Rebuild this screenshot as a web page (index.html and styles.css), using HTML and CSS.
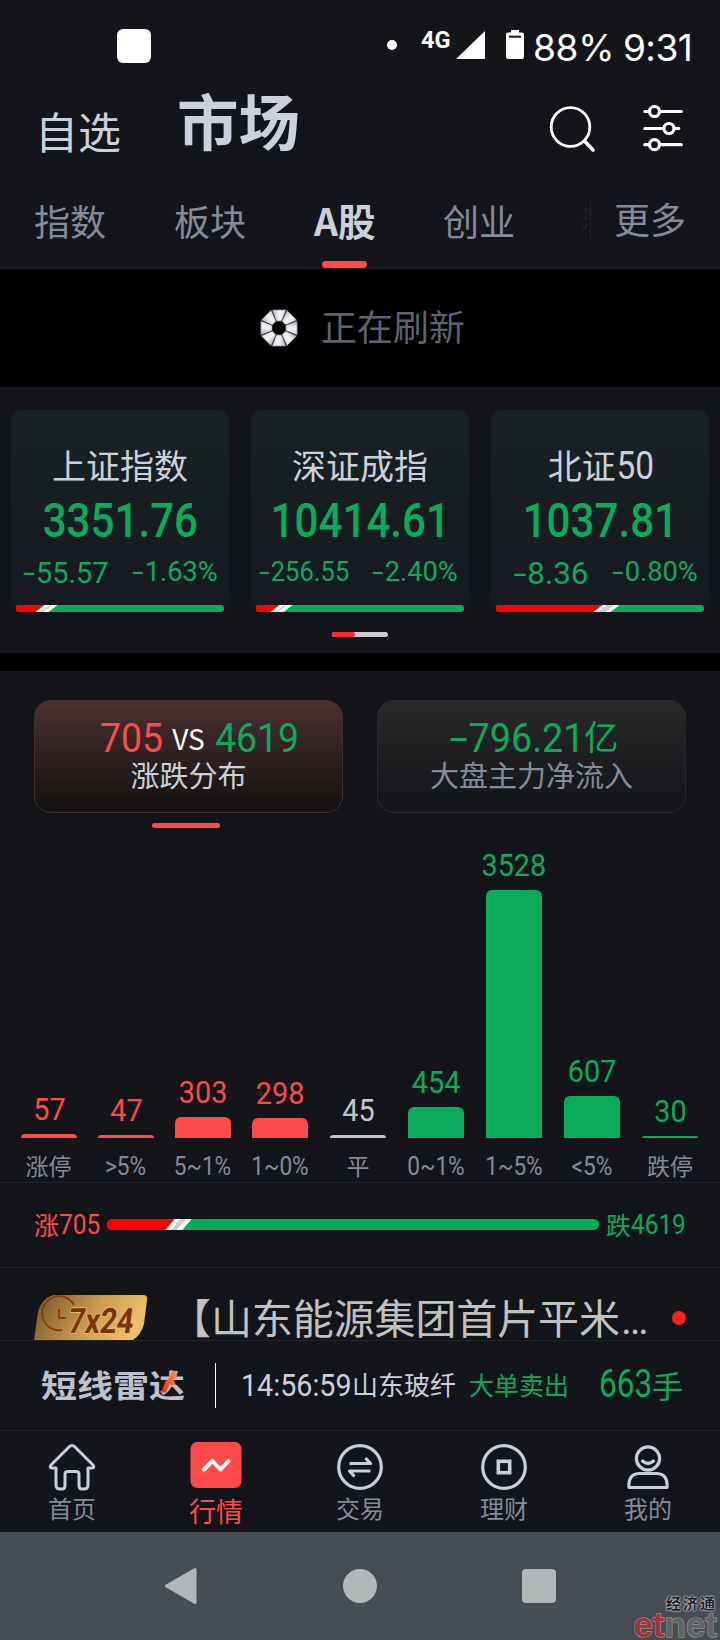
FILE: index.html
```
<!DOCTYPE html>
<html lang="zh-CN">
<head>
  <meta charset="UTF-8" />
  <meta name="viewport" content="width=device-width, initial-scale=1" />
  <title>市场 - A股</title>
  <link rel="stylesheet" href="styles.css">
</head>
<body>
  <div class="status">
    <span class="notif"></span>
    <span class="dot"></span>
    <span class="net">4G</span>
    <svg class="signal" width="29" height="28" viewBox="0 0 29 28"><path d="M29 0V28H0Z" fill="#fff"/></svg>
    <svg class="battery" width="18" height="29" viewBox="0 0 18 29"><path d="M5 0h8v2.500h3a2 2 0 0 1 2 2V27a2 2 0 0 1-2 2H2a2 2 0 0 1-2-2V4.500a2 2 0 0 1 2-2h3z" fill="#fff"/><path d="M3 6.700h12" stroke="#14151a" stroke-width="2"/></svg>
    <span class="level">88%</span>
    <span class="time">9:31</span>
  </div>

  <header class="header">
    <span class="head-item">自选</span>
    <span class="head-item current">市场</span>
    <svg class="search" width="46" height="46" viewBox="0 0 46 46" fill="none" stroke="#fff" stroke-width="2.800" stroke-linecap="round"><circle cx="21.500" cy="21" r="19.300"/><path d="M36 35.500l8 8.500" stroke-width="3.600"/></svg>
    <svg class="filter" width="40" height="48" viewBox="0 0 40 48" fill="#14151a" stroke="#fff" stroke-width="3.200" stroke-linecap="round"><path d="M1.800 7.500h36.500M1.800 24.500h34M1.800 40.700h36.500"/><circle cx="11.500" cy="7.500" r="5"/><circle cx="26" cy="24.500" r="5"/><circle cx="11.500" cy="40.700" r="5"/></svg>
  </header>

  <nav class="tabs">
    <span class="tab">指数</span>
    <span class="tab">板块</span>
    <span class="tab active">A股</span>
    <span class="tab">创业</span>
    <svg class="tab-fade" width="6" height="26" viewBox="0 0 6 26" fill="none" stroke="#202227" stroke-width="2"><path d="M2 2l3 2M1 10l4 2M5 17L1 24"/></svg>
    <span class="tab more">更多</span>
  </nav>

  <div class="refresh">
    <svg width="38" height="38" viewBox="-19 -19 38 38">
      <defs>
        <linearGradient id="blade" x1="0" y1="0" x2="1" y2="0"><stop offset="0" stop-color="#a9aeb6"/><stop offset=".5" stop-color="#f2f4f6"/><stop offset="1" stop-color="#d5d9de"/></linearGradient>
        <path id="seg" d="M-7.200-18.300H7.200L2.800-6.800H-2.800Z" fill="url(#blade)" stroke="#33373d" stroke-width=".7"/>
      </defs>
      <use href="#seg"/><use href="#seg" transform="rotate(45)"/><use href="#seg" transform="rotate(90)"/><use href="#seg" transform="rotate(135)"/>
      <use href="#seg" transform="rotate(180)"/><use href="#seg" transform="rotate(225)"/><use href="#seg" transform="rotate(270)"/><use href="#seg" transform="rotate(315)"/>
    </svg>
    <span>正在刷新</span>
  </div>

  <section class="indices">
    <div class="cards">
      <div class="card">
        <div class="name">上证指数</div>
        <div class="price"><span class="num">3351.76</span></div>
        <div class="change"><span class="num diff"><i>-</i>55.57</span><span class="num pct"><i>-</i>1.63%</span></div>
        <div class="ratio"><span class="up" style="width: 12%"></span><span class="slash"></span></div>
      </div>
      <div class="card">
        <div class="name">深证成指</div>
        <div class="price"><span class="num">10414.61</span></div>
        <div class="change"><span class="num diff long"><i>-</i>256.55</span><span class="num pct"><i>-</i>2.40%</span></div>
        <div class="ratio"><span class="up" style="width: 9.700%"></span><span class="slash"></span></div>
      </div>
      <div class="card">
        <div class="name">北证<span class="num">50</span></div>
        <div class="price"><span class="num">1037.81</span></div>
        <div class="change"><span class="num diff short"><i>-</i>8.36</span><span class="num pct"><i>-</i>0.80%</span></div>
        <div class="ratio"><span class="up" style="width: 51.500%"></span><span class="slash wide"></span></div>
      </div>
    </div>
    <div class="pager"><span></span></div>
  </section>

  <section class="market">
    <div class="switch">
      <div class="box on">
        <div class="figure"><span class="num red">705</span><span class="vs">VS</span><span class="num green">4619</span></div>
        <div class="caption">涨跌分布</div>
      </div>
      <div class="box">
        <div class="figure flow"><span class="num green"><i>-</i>796.21</span><span class="unit">亿</span></div>
        <div class="caption">大盘主力净流入</div>
      </div>
    </div>
    <div class="switch-line"></div>

    <div class="chart">
      <div class="col red"><span class="num">57</span><b style="height: 4px"></b></div>
      <div class="col red"><span class="num">47</span><b style="height: 3px"></b></div>
      <div class="col red"><span class="num">303</span><b style="height: 21px"></b></div>
      <div class="col red"><span class="num">298</span><b style="height: 20px"></b></div>
      <div class="col flat"><span class="num">45</span><b style="height: 3px"></b></div>
      <div class="col green"><span class="num">454</span><b style="height: 31px"></b></div>
      <div class="col green"><span class="num">3528</span><b style="height: 248px"></b></div>
      <div class="col green"><span class="num">607</span><b style="height: 42px"></b></div>
      <div class="col green"><span class="num">30</span><b style="height: 2px"></b></div>
    </div>
    <div class="axis">
      <span>涨停</span>
      <span class="num">&gt;5%</span>
      <span class="num">5~1%</span>
      <span class="num">1~0%</span>
      <span>平</span>
      <span class="num">0~1%</span>
      <span class="num">1~5%</span>
      <span class="num">&lt;5%</span>
      <span>跌停</span>
    </div>
  </section>

  <div class="total">
    <div class="side red">涨<span class="num">705</span></div>
    <div class="ratio"><span class="up" style="width: 13.600%"></span><span class="slash"></span></div>
    <div class="side green">跌<span class="num">4619</span></div>
  </div>

  <div class="news">
    <svg width="114" height="45" viewBox="0 0 114 45">
      <defs><linearGradient id="gold" x1="0" y1="0" x2="1" y2=".25"><stop offset="0" stop-color="#705427"/><stop offset=".6" stop-color="#cc9c50"/><stop offset="1" stop-color="#f0bd6c"/></linearGradient></defs>
      <path d="M19 0H109Q114 0 113 5L110 29Q107 40 99 45H0L4 17Q7 4 19 0Z" fill="url(#gold)"/>
      <path d="M40 10A17 17 0 1 0 28 35" fill="none" stroke="#8a3c0c" stroke-width="1.800"/>
      <path d="M25 14v9h7" fill="none" stroke="#8a3c0c" stroke-width="1.800"/>
      <g font-family="Roboto, sans-serif" font-size="35" font-weight="700" transform="skewX(-7)">
        <text x="38" y="38" textLength="65" lengthAdjust="spacingAndGlyphs" fill="#7b3308" stroke="#e9bc7c" stroke-width="1.500" paint-order="stroke">7x24</text>
      </g>
    </svg>
    <span class="title">【山东能源集团首片平米<em>…</em></span>
    <span class="unread"></span>
  </div>

  <div class="radar">
    <div class="radar-logo">短线雷达
      <svg width="18" height="26" viewBox="0 0 18 24" preserveAspectRatio="none"><defs><linearGradient id="fire" x1="1" y1="0" x2="0" y2="1"><stop offset="0" stop-color="#ff9a2a"/><stop offset="1" stop-color="#ff1d1d"/></linearGradient></defs><path d="M11 0h6l-2 8h-3l3 7h-5l-1-2-4 10H0l5-13h2z" fill="url(#fire)"/></svg>
    </div>
    <span class="radar-line"></span>
    <span class="num clock">14:56:59</span>
    <span class="stock">山东玻纤</span>
    <span class="action">大单卖出</span>
    <span class="lots"><span class="num">663</span>手</span>
  </div>

  <nav class="bottom">
    <div class="item">
      <svg width="48" height="48" viewBox="0 0 48 48" fill="none" stroke="#c9ced9" stroke-width="3" stroke-linejoin="round"><path d="M24 2.500Q25.500 2.500 27 4L45 22Q47 25 44 25H40V42Q40 46 36 46H34Q31 46 31 42V31Q31 28.500 28 28.500H20Q17 28.500 17 31V42Q17 46 14 46H12Q8 46 8 42V25H4Q1 25 3 22L21 4Q22.500 2.500 24 2.500Z"/></svg>
      <span>首页</span>
    </div>
    <div class="item active">
      <svg width="52" height="48" viewBox="0 0 52 48"><rect x=".5" y="1" width="51" height="46" rx="7" fill="#ff4a4a"/><path d="M14 28.500l8.500-8.500L30.500 28.500l8-8.500" fill="none" stroke="#fff" stroke-width="4" stroke-linecap="round" stroke-linejoin="round"/></svg>
      <span>行情</span>
    </div>
    <div class="item">
      <svg width="48" height="48" viewBox="0 0 48 48" fill="none" stroke="#c9ced9" stroke-width="3.200"><circle cx="24" cy="24" r="21.300"/><path d="M13.500 20.500H34.500L29.500 15M34.500 28H13.500L18.500 33.500" stroke-linejoin="round"/></svg>
      <span>交易</span>
    </div>
    <div class="item">
      <svg width="48" height="48" viewBox="0 0 48 48" fill="none" stroke="#c9ced9" stroke-width="3.200"><circle cx="24" cy="24" r="21.300"/><rect x="18.300" y="18.300" width="11.400" height="11.400" stroke-width="3.600"/></svg>
      <span>理财</span>
    </div>
    <div class="item">
      <svg width="48" height="48" viewBox="0 0 48 48" fill="none" stroke="#c9ced9" stroke-width="3.200"><circle cx="24" cy="15.500" r="11.600"/><path d="M18.500 18q5.500 5 11 0" stroke-linecap="round"/><path d="M5 44.500Q4 31 15 30.500H33Q44 31 43 44.500Z" stroke-linejoin="round"/></svg>
      <span>我的</span>
    </div>
  </nav>

  <footer class="system">
    <svg width="34" height="38" viewBox="0 0 34 38"><path d="M31 2.500V35.500L2.500 19Z" fill="#b3b7b8" stroke="#b3b7b8" stroke-width="3" stroke-linejoin="round"/></svg>
    <span class="home"></span>
    <span class="recent"></span>
    <div class="mark">
      <span class="mark-cn">经济通</span>
      <span class="mark-en"><b>et</b>net</span>
    </div>
  </footer>
</body>
</html>
```
FILE: styles.css
```
* {
  box-sizing: border-box;
}
body {
  margin: 0;
  width: 720px;
  height: 1640px;
  background: #14151a;
  color: #ccd0da;
  font-family: "Noto Sans CJK SC", sans-serif;
  overflow: hidden;
}
svg {
  display: block;
  flex: none;
}
.num {
  display: inline-block;
  font-family: Roboto, sans-serif;
  white-space: nowrap;
}
.num i {
  display: inline-block;
  font-style: normal;
  transform: scaleX(1.5);
  margin: 0 3px 0 2px;
}
.red { color: #ff4a4a; }
.green { color: #0aab5a; }

/* status bar */
.status {
  display: flex;
  align-items: flex-start;
  height: 84px;
  padding: 29px 0 0 117px;
  color: #fff;
  font-family: Inter, sans-serif;
}
.notif {
  width: 34px;
  height: 34px;
  border-radius: 6px;
  background: #fff;
}
.dot {
  width: 10px;
  height: 10px;
  margin: 11px 0 0 236px;
  border-radius: 50%;
  background: #fff;
}
.net {
  width: 32px;
  margin: 0 0 0 24px;
  font: 700 23.500px/23px Roboto, sans-serif;
}
.signal { margin: 2px 0 0 3px; }
.battery { margin: 1px 0 0 21px; }
.level, .time {
  font-size: 37px;
  line-height: 37px;
  letter-spacing: -0.300px;
  white-space: nowrap;
}
.level {
  width: 90px;
  margin-left: 9px;
}
.time {
  letter-spacing: -0.600px;
}

/* header */
.header {
  display: flex;
  align-items: flex-start;
  height: 101px;
  padding-left: 35px;
}
.head-item {
  width: 142px;
  padding-top: 20px;
  font-size: 43px;
  line-height: 52px;
}
.head-item.current {
  width: 372px;
  padding-top: 2px;
  font-size: 61.500px;
  line-height: 68px;
  font-weight: 700;
}
.search { margin-top: 22px; }
.filter { margin: 20px 0 0 48px; }

/* tabs */
.tabs {
  display: flex;
  align-items: center;
  height: 84px;
  padding: 0 34px 13px 34px;
  border-bottom: 1px solid #22242c;
  font-size: 36px;
  line-height: 52px;
  color: #858b98;
}
.tab {
  width: 140px;
}
.tab + .tab {
  margin-left: 1px;
}
.tab.active {
  position: relative;
  width: 129px;
  color: #ccd0da;
  font-size: 37.500px;
  font-weight: 700;
}
.tab.active::after {
  content: "";
  position: absolute;
  left: 8px;
  bottom: -22px;
  width: 45px;
  height: 7px;
  border-radius: 4px;
  background: #ff4a4a;
}
.tab-fade {
  width: 6px;
}
.tab.more {
  width: auto;
  height: 42px;
  margin: -1px 0 0 2px;
  padding-left: 23px;
  border-left: 1px solid #22242c;
  line-height: 38px;
  white-space: nowrap;
}

.refresh {
  display: flex;
  align-items: center;
  gap: 23px;
  height: 118px;
  padding: 0 0 0 260px;
  background: #000;
  color: #5c6371;
  font-size: 36px;
  line-height: 52px;
}
.refresh span { margin-top: -6px; }

/* index cards */
.indices {
  height: 284px;
  padding: 23px 11px 0;
  border-bottom: 18px solid #000;
}
.cards {
  display: grid;
  grid-template-columns: repeat(3, 218px);
  gap: 22px;
}
.card {
  height: 202px;
  padding: 31px 5px 0;
  border-radius: 10px;
  background: linear-gradient(#192225, #171c20 68%, #181b24 75%, #171a21);
  text-align: center;
}
.name {
  height: 50px;
  font-size: 34px;
  line-height: 48px;
}
.name .num {
  font-size: 38px;
  margin: 0 -4px 0 -2px;
  transform: scaleX(.88);
}
.price {
  height: 63px;
  color: #0aab5a;
}
.price .num {
  font-size: 49px;
  line-height: 60px;
  font-weight: 500;
  margin: 0 -20px;
  transform: scaleX(.86);
}
.change {
  display: flex;
  justify-content: space-between;
  height: 51px;
  padding: 0 6px 0 7px;
  color: #0aab5a;
}
.change .num {
  font-size: 28px;
  line-height: 36px;
}
.change .diff {
  font-size: 29.500px;
  line-height: 38px;
  transform: scaleX(.98);
  transform-origin: left;
}
.change .diff.long {
  margin-left: -4px;
  font-size: 27.500px;
  line-height: 35px;
  transform: scaleX(.93);
}
.change .diff.short {
  padding-left: 11px;
  font-size: 32px;
}
.change .pct {
  transform: scaleX(.975);
  transform-origin: right;
}
.ratio {
  display: flex;
  height: 7px;
  border-radius: 3px;
  background: #0aab5a;
  overflow: hidden;
}
.ratio .up {
  flex: none;
  background: #f00;
}
.slash {
  width: 13px;
  margin-left: -1px;
  flex: none;
  transform: skewX(-52deg);
  background: linear-gradient(90deg, #fff 0 38%, #ccc 38% 58%, #fff 58%);
  box-shadow: -6px 0 #f00;
}
.slash.wide {
  width: 17px;
  margin-left: -5px;
  background: linear-gradient(90deg, #fff 0 25%, #ccc 25% 70%, #fff 70%);
}
.pager {
  width: 56px;
  height: 5px;
  margin: 20px auto 0;
  border-radius: 3px;
  background: #ccc;
  overflow: hidden;
}
.pager span {
  display: block;
  width: 23px;
  height: 5px;
  border-radius: 3px;
  background: #f82a2c;
}

/* rise / fall distribution */
.market {
  height: 512px;
  padding-top: 29px;
  border-bottom: 1px solid #22242b;
}
.switch {
  display: flex;
  gap: 34px;
  padding: 0 34px;
}
.box {
  width: 309px;
  height: 113px;
  padding-top: 16px;
  border: 1px solid #2a2a2a;
  border-radius: 17px;
  background: linear-gradient(#292929, #15161a 90%);
  color: #858b98;
  text-align: center;
}
.box.on {
  border-color: #452d2e;
  background: linear-gradient(#4a3031, #181413 90%);
  color: #ccd0da;
}
.figure {
  display: flex;
  justify-content: center;
  align-items: center;
  height: 42px;
  padding-left: 23px;
}
.figure.flow {
  padding-left: 0;
}
.figure .num {
  font-size: 41px;
  line-height: 42px;
  transform: scaleX(.91);
}
.figure.flow .num {
  margin-left: -2px;
  transform: scaleX(.92);
}
.figure .num i {
  margin: 0 5px;
  transform: scaleX(1.8);
}
.vs {
  margin: 0 6px;
  color: #fff;
  font-size: 28px;
  line-height: 38px;
}
.unit {
  margin: -6px 0 0 -6px;
  font-size: 34.500px;
  line-height: 40px;
}
.flow .unit { color: #0aab5a; }
.caption {
  font-size: 29px;
  line-height: 31px;
}
.switch-line {
  width: 68px;
  height: 5px;
  margin: 10px 0 0 152px;
  border-radius: 3px;
  background: #ff4a4a;
}
.chart, .axis {
  display: grid;
  grid-template-columns: repeat(3, 77px) repeat(6, 78px);
}
.chart {
  align-items: end;
  height: 310px;
  padding-left: 21px;
}
.col {
  display: flex;
  flex-direction: column;
  align-items: center;
  width: 56px;
}
.col .num {
  font-size: 31px;
  line-height: 36px;
  margin-bottom: 6px;
  transform: scaleX(.93);
}
.col b {
  width: 56px;
  border-radius: 6px 6px 0 0;
  background: currentColor;
}
.col.flat { color: #c4c5ca; }
.axis {
  padding: 11px 0 0 10px;
  color: #858b98;
  font-size: 23px;
  line-height: 33px;
}
.axis span {
  text-align: center;
}
.axis .num {
  font-size: 26px;
  line-height: 35px;
  transform: scaleX(.87);
}

.total {
  display: flex;
  align-items: center;
  height: 85px;
  padding: 0 34px 2px;
  border-bottom: 1px solid #22242b;
}
.total .side {
  display: flex;
  font-size: 25px;
  line-height: 34px;
  width: 73px;
}
.total .side.green {
  width: 79px;
  margin-left: 7px;
}
.total .num {
  padding-top: 1px;
  font-size: 28px;
  transform: scaleX(.87);
  transform-origin: left;
}
.total .ratio {
  width: 492px;
  height: 11px;
  border-radius: 6px;
}
.total .slash {
  width: 17px;
  margin-left: -4px;
  transform: skewX(-40deg);
  background: linear-gradient(90deg, #fff 0 33%, #ccc 33% 66%, #fff 66%);
}

/* headlines */
.news {
  display: flex;
  height: 73px;
  padding: 27px 34px 0;
  border-bottom: 1px solid #22242b;
}
.title {
  width: 502px;
  margin-left: 22px;
  color: #c1c1c1;
  font-size: 41px;
  line-height: 43px;
  letter-spacing: -0.100px;
  white-space: nowrap;
}
.title em {
  margin-left: 1px;
  font-family: Roboto, sans-serif;
  font-style: normal;
}
.unread {
  width: 14px;
  height: 14px;
  margin: 16px 0 0 0;
  border-radius: 50%;
  background: #ff1f1f;
}
.radar {
  display: flex;
  align-items: center;
  height: 90px;
  padding-left: 41px;
  border-bottom: 1px solid #22242b;
  white-space: nowrap;
}
.radar-logo {
  position: relative;
  width: 174px;
  margin-top: -6px;
  color: #bcc2cd;
  font-size: 36px;
  line-height: 40px;
  font-weight: 700;
  transform: scaleY(.86);
}
.radar-logo svg {
  position: absolute;
  left: 120px;
  top: 6px;
}
.radar-line {
  width: 1px;
  height: 45px;
  background: #fff;
}
.clock {
  width: 111px;
  margin: 0 0 0 25px;
  font-size: 30.500px;
  transform: scaleX(.94);
  transform-origin: left;
}
.stock {
  width: 117px;
  margin-top: -4px;
  font-size: 26px;
}
.action {
  width: 130px;
  margin-top: -4px;
  color: #0aab5a;
  font-size: 25px;
}
.lots {
  display: flex;
  align-items: center;
  margin-top: -3px;
  color: #0aab5a;
  font-size: 31px;
}
.lots .num {
  width: 53px;
  font-size: 38px;
  transform: scaleX(.83);
  transform-origin: left;
}

/* bottom navigation */
.bottom {
  display: flex;
  height: 101px;
  padding-top: 12px;
}
.item {
  display: flex;
  flex-direction: column;
  align-items: center;
  width: 144px;
  color: #858b98;
  font-size: 24px;
  line-height: 34px;
}
.item.active {
  gap: 3px;
  margin-top: -2px;
  color: #ff4a4a;
  font-size: 27px;
  line-height: 38px;
}
.system {
  position: relative;
  display: flex;
  align-items: center;
  height: 108px;
  padding-left: 164px;
  background: #464d53;
}
.home {
  width: 34px;
  height: 34px;
  margin-left: 145px;
  border-radius: 50%;
  background: #b3b7b8;
}
.recent {
  width: 34px;
  height: 34px;
  margin-left: 145px;
  border-radius: 4px;
  background: #b3b7b8;
}
.mark {
  position: absolute;
  right: 3px;
  bottom: 1px;
  display: flex;
  flex-direction: column;
  align-items: flex-end;
}
.mark-cn {
  color: #222;
  font-size: 15px;
  line-height: 17px;
  font-weight: 700;
  letter-spacing: 2px;
  text-shadow: 0 0 2px #ddd, 0 0 2px #ddd;
}
.mark-en {
  color: #5d6265;
  font: 700 35px/28px "Liberation Sans", sans-serif;
  -webkit-text-stroke: 1px #a8aaac;
  paint-order: stroke;
}
.mark-en b {
  color: #a83036;
}
```
